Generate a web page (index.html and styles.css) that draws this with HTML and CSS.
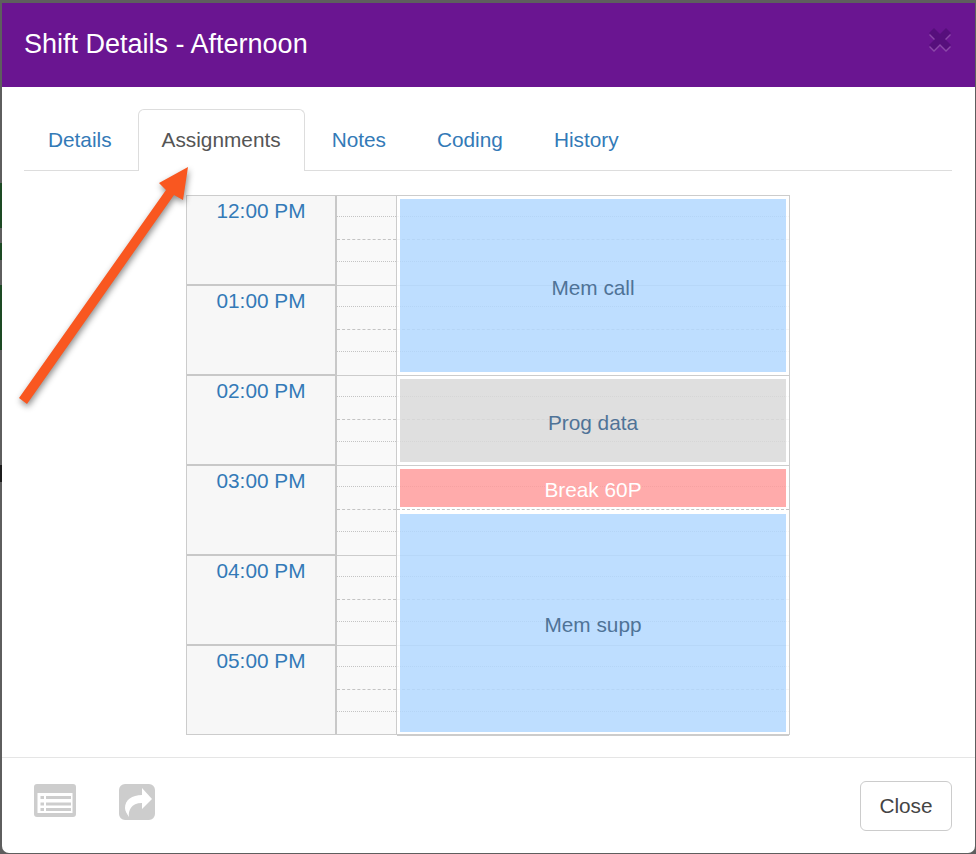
FILE: index.html
```html
<!DOCTYPE html>
<html lang="en">
<head>
<meta charset="utf-8">
<title>Shift Details - Afternoon</title>
<link rel="stylesheet" href="styles.css">
</head>
<body>
<div class="dialog">
  <header class="dialog-header">
    <h1 class="dialog-title">Shift Details - Afternoon</h1>
    <svg class="close-x" viewBox="0 0 22 24" aria-hidden="true"><path class="close-x-shadow" d="M0 7l5-5 6 6 6-6 5 5-6 6 6 6-5 5-6-6-6 6-5-5 6-6z"/><path class="close-x-main" d="M0 5l5-5 6 6 6-6 5 5-6 6 6 6-5 5-6-6-6 6-5-5 6-6z"/></svg>
  </header>
  <main class="dialog-body">
    <nav class="tabs">
      <a class="tab tab-first">Details</a>
      <a class="tab tab-active">Assignments</a>
      <a class="tab">Notes</a>
      <a class="tab">Coding</a>
      <a class="tab">History</a>
    </nav>
    <section class="schedule">
      <div class="hours">
        <div class="hour">12:00 PM</div>
        <div class="hour">01:00 PM</div>
        <div class="hour">02:00 PM</div>
        <div class="hour">03:00 PM</div>
        <div class="hour">04:00 PM</div>
        <div class="hour">05:00 PM</div>
      </div>
      <div class="gutter">
        <div class="gutter-hour"><i class="tick"></i><i class="tick tick-dash"></i><i class="tick"></i></div>
        <div class="gutter-hour"><i class="tick"></i><i class="tick tick-dash"></i><i class="tick"></i></div>
        <div class="gutter-hour"><i class="tick"></i><i class="tick tick-dash"></i><i class="tick"></i></div>
        <div class="gutter-hour"><i class="tick"></i><i class="tick tick-dash"></i><i class="tick"></i></div>
        <div class="gutter-hour"><i class="tick"></i><i class="tick tick-dash"></i><i class="tick"></i></div>
        <div class="gutter-hour"><i class="tick"></i><i class="tick tick-dash"></i><i class="tick"></i></div>
      </div>
      <div class="slots">
        <div class="gutter-hour"><i class="tick"></i><i class="tick tick-dash"></i><i class="tick"></i></div>
        <div class="gutter-hour"><i class="tick"></i><i class="tick tick-dash"></i><i class="tick"></i></div>
        <div class="gutter-hour"><i class="tick"></i><i class="tick tick-dash"></i><i class="tick"></i></div>
        <div class="gutter-hour"><i class="tick"></i><i class="tick tick-dash"></i><i class="tick"></i></div>
        <div class="gutter-hour"><i class="tick"></i><i class="tick tick-dash"></i><i class="tick"></i></div>
        <div class="gutter-hour"><i class="tick"></i><i class="tick tick-dash"></i><i class="tick"></i></div>
        <div class="event event-call">Mem call</div>
        <div class="event event-prog">Prog data</div>
        <div class="event event-break">Break 60P</div>
        <div class="event event-supp">Mem supp</div>
      </div>
    </section>
  </main>
  <footer class="dialog-footer">
    <div class="footer-icons">
      <svg class="icon-list" viewBox="0 0 42 33" aria-hidden="true">
        <path class="icon-fill" fill-rule="evenodd" d="M3 0h36a3 3 0 0 1 3 3v27a3 3 0 0 1-3 3H3a3 3 0 0 1-3-3V3a3 3 0 0 1 3-3zM3.500 9v20h35V9z"/>
        <path class="icon-fill" d="M6.500 12h3.500v3H6.500zM12 12h25v3H12zM6.500 18.500h3.500v3H6.500zM12 18.500h25v3H12zM6.500 24h3.500v3H6.500zM12 24h25v3H12z"/>
      </svg>
      <svg class="icon-share" viewBox="0 0 36 36" aria-hidden="true">
        <path class="icon-fill" fill-rule="evenodd" d="M6 0h24a6 6 0 0 1 6 6v24a6 6 0 0 1-6 6H6a6 6 0 0 1-6-6V6a6 6 0 0 1 6-6zM23 4v7C13 11 6 16 6 24C6 27 8 30 10 33C9 27 12 19 23 19v6L33 15z"/>
      </svg>
    </div>
    <button class="btn-close" type="button">Close</button>
  </footer>
  <svg class="arrow" viewBox="0 0 976 854" aria-hidden="true">
    <polygon class="arrow-shape" points="188,167 183,200 174,195 27,404 19,398 166,190 159,183"/>
  </svg>
</div>
</body>
</html>
```
FILE: styles.css
```css
* { box-sizing: border-box; }
html, body { height: 100%; }
body {
  margin: 0;
  background-color: #5e5e5e;
  background-image: linear-gradient(to bottom,
    transparent 183px, #1d4a24 183px, #1d4a24 228px,
    transparent 228px, transparent 243px, #1d4a24 243px, #1d4a24 260px,
    transparent 260px, transparent 285px, #1d4a24 285px, #1d4a24 350px,
    transparent 350px, transparent 465px, #1c1c1c 465px, #1c1c1c 482px,
    transparent 482px);
  background-size: 2px 100%;
  background-repeat: no-repeat;
  font-family: "Liberation Sans", Arial, sans-serif;
  overflow: hidden;
  padding: 3px 1px 1px 2px;
}
.dialog {
  position: relative;
  height: 850px;
  background: #fff;
  border-radius: 0 0 7px 7px;
  display: flex;
  flex-direction: column;
}
.dialog-header {
  height: 84px;
  flex: none;
  background: #6a1591;
  display: flex;
  align-items: center;
  justify-content: space-between;
  padding: 0 24px 0 22px;
}
.dialog-title {
  margin: 0 0 2px;
  font-size: 27px;
  font-weight: 400;
  color: #fff;
}
.close-x { width: 22px; height: 24px; margin-bottom: 10px; overflow: visible; }
.close-x-shadow { fill: #8a47a8; }
.close-x-main { fill: #560f7c; }
.dialog-body {
  flex: 1;
  padding: 22px 23px 0 22px;
}
.tabs {
  display: flex;
  gap: 3px;
  height: 62px;
  border-bottom: 1px solid #ddd;
}
.tab {
  height: 62px;
  padding: 18px 23px 0;
  border: 1px solid transparent;
  border-bottom: 0;
  font-size: 20.800px;
  line-height: 24px;
  color: #337ab7;
}
.tab-first { margin-right: -1px; }
.tab-active {
  color: #555;
  background: #fff;
  border-color: #ddd;
  border-radius: 6px 6px 0 0;
}
.schedule {
  display: flex;
  width: 604px;
  height: 540px;
  margin: 24px 0 0 162px;
  border: 1px solid #ccc;
}
.hours { width: 150px; flex: none; }
.hour {
  height: 90px;
  background: #f7f7f7;
  border-bottom: 2px solid #c8c8c8;
  border-right: 2px solid #c8c8c8;
  color: #337ab7;
  font-size: 20.800px;
  line-height: 30px;
  text-align: center;
}
.hour:last-child { border-bottom: 0; height: 88px; }
.gutter {
  width: 60px;
  flex: none;
  background: #f9f9f9;
  border-right: 1px solid #ccc;
}
.gutter-hour {
  height: 90px;
  border-bottom: 1px solid #ccc;
  padding-top: 20px;
}
.gutter-hour:last-child { height: 88px; border-bottom: 0; }
.tick { display: block; height: 0; margin-top: 21px; border-top: 1px dotted #c4c4c4; }
.tick:first-child { margin-top: 0; }
.tick-dash { margin-top: 22px; border-top-style: dashed; }
.slots {
  position: relative;
  flex: 1;
}
.event {
  position: absolute;
  left: 0;
  right: 0;
  display: flex;
  align-items: center;
  justify-content: center;
  padding-top: 5px;
  border-left: 3px solid rgba(255,255,255,.85);
  border-right: 3px solid rgba(255,255,255,.85);
  background-clip: padding-box;
  font-size: 20.800px;
  color: #4f7397;
}
.event-call { top: 3px; height: 173px; background-color: rgba(179,216,255,.85); }
.event-prog { top: 183px; height: 83px; background-color: rgba(217,217,217,.85); }
.event-break { top: 273px; height: 38px; padding-top: 3px; background-color: rgba(255,156,156,.85); color: #fff; }
.event-supp { top: 318px; height: 218px; padding-top: 3px; background-color: rgba(179,216,255,.85); }
.dialog-footer {
  height: 96px;
  flex: none;
  border-top: 1px solid #e5e5e5;
  display: flex;
  justify-content: space-between;
  padding: 23px 23px 0 32px;
}
.footer-icons {
  display: flex;
  gap: 43px;
  align-items: flex-start;
  padding-top: 3px;
}
.icon-list { width: 42px; height: 33px; }
.icon-share { width: 36px; height: 36px; }
.icon-fill { fill: #cdcdcd; }
.btn-close {
  width: 92px;
  height: 50px;
  background: #fff;
  border: 1px solid #ccc;
  border-radius: 6px;
  color: #444;
  font: 20.800px "Liberation Sans", Arial, sans-serif;
}
.arrow {
  position: absolute;
  left: -2px;
  top: -3px;
  width: 976px;
  height: 854px;
  pointer-events: none;
  overflow: visible;
}
.arrow-shape {
  fill: #f95720;
  filter: drop-shadow(1px 3px 3px rgba(0,0,0,.45));
}
```
